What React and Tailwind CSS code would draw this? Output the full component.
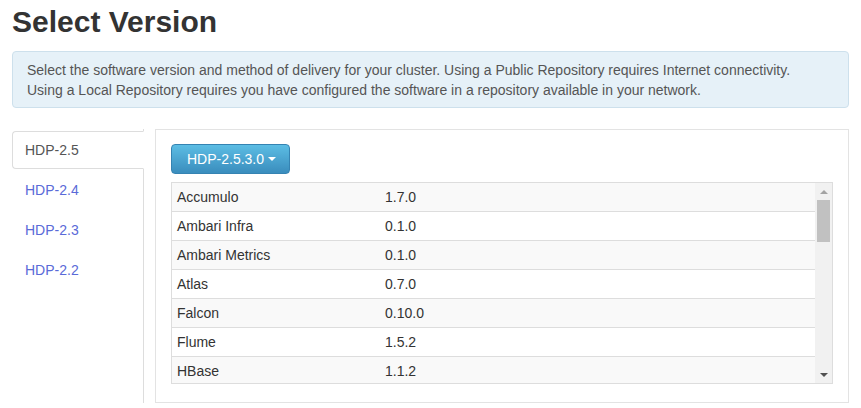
import React from "react";

const versions = ["HDP-2.5", "HDP-2.4", "HDP-2.3", "HDP-2.2"];

const services = [
  ["Accumulo", "1.7.0"],
  ["Ambari Infra", "0.1.0"],
  ["Ambari Metrics", "0.1.0"],
  ["Atlas", "0.7.0"],
  ["Falcon", "0.10.0"],
  ["Flume", "1.5.2"],
  ["HBase", "1.1.2"],
];

function FakeScrollbar() {
  return (
    <div className="w-[17px] bg-[#f1f1f1] flex flex-col">
      <div className="h-[17px] flex items-center justify-center">
        <span className="w-0 h-0 border-l-[4px] border-r-[4px] border-b-[4px] border-l-transparent border-r-transparent border-b-[#a3a3a3]" />
      </div>
      <div className="mx-[2px] h-[42px] bg-[#c1c1c1]" />
      <div className="flex-1" />
      <div className="h-[17px] flex items-center justify-center">
        <span className="w-0 h-0 border-l-[4px] border-r-[4px] border-t-[4px] border-l-transparent border-r-transparent border-t-[#505050]" />
      </div>
    </div>
  );
}

export default function App() {
  return (
    <div
      className="px-3 bg-white text-[#333] text-[14px] leading-[20px] h-[408px] overflow-hidden"
      style={{ fontFamily: "'Liberation Sans', Arial, sans-serif" }}
    >
      <h2 className="mt-[5px] text-[30px] leading-[33px] font-bold text-[#333]">
        Select Version
      </h2>

      {/* Info alert */}
      <div className="mt-[13px] bg-[#e6f1f8] border border-[#cde0ec] rounded-[4px] pl-[14px] pr-4 pt-2 pb-[7px] text-[#555]">
        Select the software version and method of delivery for your cluster. Using a Public Repository requires Internet connectivity.
        <br />
        Using a Local Repository requires you have configured the software in a repository available in your network.
      </div>

      <div className="mt-[21px] flex h-[274px]">
        {/* Version tabs */}
        <ul className="w-[132px] border-r border-[#ddd] pt-[2px]">
          {versions.map((v, i) => (
            <li
              key={v}
              className={
                i === 0
                  ? "h-[38px] mb-[2px] -mr-px flex items-center px-3 bg-white border border-[#ddd] border-r-transparent rounded-l-[4px] text-[#555]"
                  : "h-[38px] mb-[2px] flex items-center px-[13px] text-[#5a6ad8]"
              }
            >
              {v}
            </li>
          ))}
        </ul>

        {/* Tab content */}
        <div className="ml-[11px] flex-1 border border-[#e3e3e3] pt-[14px] px-[15px] pb-[18px]">
          <button className="h-[30px] pl-[15px] pr-[13px] flex items-center text-white rounded-[4px] border border-[#3583b2] bg-gradient-to-b from-[#5cbde4] to-[#3a8dbd]">
            HDP-2.5.3.0
            <span className="ml-[4px] w-0 h-0 border-l-[4px] border-r-[4px] border-t-[4px] border-l-transparent border-r-transparent border-t-white" />
          </button>

          <div className="mt-[8px] h-[202px] border border-[#ddd] flex">
            <div className="flex-1 overflow-hidden">
              {services.map(([name, ver], i) => (
                <div
                  key={name}
                  className={`flex h-[24px] box-content items-start pt-[4px] ${
                    i % 2 === 0 ? "bg-[#f9f9f9]" : "bg-white"
                  } ${i > 0 ? "border-t border-[#ddd]" : ""}`}
                >
                  <div className="w-[208px] pl-[5px]">{name}</div>
                  <div className="flex-1 pl-[5px]">{ver}</div>
                </div>
              ))}
            </div>
            <FakeScrollbar />
          </div>
        </div>
      </div>
    </div>
  );
}
